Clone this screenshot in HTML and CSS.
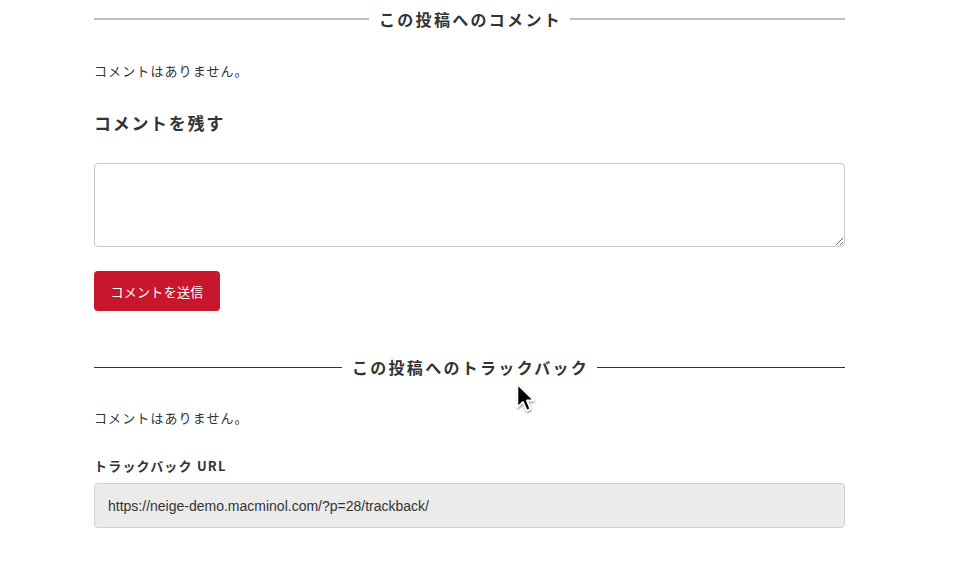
FILE: index.html
```html
<!DOCTYPE html>
<html lang="ja">
<head>
<meta charset="utf-8">
<title>コメント</title>
<link rel="stylesheet" href="styles.css">
</head>
<body>
<div class="wrap">
  <h2 class="sec-title sec-title--light"><span class="line"></span><span class="sec-text">この投稿へのコメント</span><span class="line"></span></h2>
  <p class="note note--first">コメントはありません。</p>
  <h3 class="reply-title">コメントを残す</h3>
  <textarea class="comment-box"></textarea>
  <button class="submit" type="button">コメントを送信</button>
  <h2 class="sec-title sec-title--dark"><span class="line"></span><span class="sec-text">この投稿へのトラックバック</span><span class="line"></span></h2>
  <p class="note note--second">コメントはありません。</p>
  <div class="tb-label">トラックバック URL</div>
  <div class="tb-url">https://neige-demo.macminol.com/?p=28/trackback/</div>
</div>
<svg class="cursor" width="24" height="34" viewBox="0 0 24 34">
  <defs>
    <filter id="sh" x="-50%" y="-50%" width="200%" height="200%">
      <feDropShadow dx="0.5" dy="1.5" stdDeviation="1.2" flood-color="#000" flood-opacity="0.45"/>
    </filter>
  </defs>
  <path d="M1.5 1.5 L1.5 24 L7 18.8 L10.8 27.6 L14.4 26.1 L10.7 17.4 L17.8 17.4 Z" fill="#000" stroke="#fff" stroke-width="1.6" stroke-linejoin="round" filter="url(#sh)"/>
</svg>
</body>
</html>
```
FILE: styles.css
```css
html, body {
  margin: 0;
  padding: 0;
  background: #fff;
}
body {
  font-family: "Noto Sans CJK JP", "Noto Sans", sans-serif;
  color: #333;
  position: relative;
  width: 963px;
  height: 567px;
  overflow: hidden;
}
.wrap {
  margin-left: 94px;
  width: 751px;
  display: flex;
  flex-direction: column;
}
.sec-title {
  display: flex;
  align-items: center;
  gap: 10px;
  margin: 0;
  height: 20px;
  font-size: 16px;
  line-height: 20px;
  font-weight: bold;
  letter-spacing: 2.3px;
  color: #333;
}
.sec-title--light { margin-top: 9px; }
.sec-title--dark { margin-top: 46px; }
.sec-title .line {
  flex: 1;
  height: 0;
}
.sec-title--light .line { border-top: 2px solid #bdbdbd; }
.sec-title--dark .line { border-top: 1px solid #333; }
.sec-text {
  margin-right: -2px;
  white-space: nowrap;
}
.note {
  margin: 0;
  font-size: 13px;
  line-height: 20px;
  letter-spacing: 1.1px;
  color: #333;
}
.note--first { margin-top: 32px; }
.note--second { margin-top: 31px; }
.reply-title {
  margin: 29px 0 0;
  font-size: 17px;
  line-height: 26px;
  font-weight: bold;
  letter-spacing: 1.7px;
  color: #333;
}
.comment-box {
  display: block;
  margin-top: 27px;
  width: 751px;
  height: 84px;
  box-sizing: border-box;
  border: 1px solid #c8c8c8;
  border-radius: 4px;
  background: #fff;
  resize: vertical;
}
.submit {
  margin-top: 24px;
  align-self: flex-start;
  width: 126px;
  height: 40px;
  border: none;
  border-radius: 4px;
  background: #c8162d;
  color: #fff;
  font-family: "Noto Sans CJK JP", sans-serif;
  font-size: 13px;
  letter-spacing: 0.3px;
  padding: 0;
}
.tb-label {
  margin-top: 28px;
  font-size: 13px;
  line-height: 20px;
  font-weight: bold;
  letter-spacing: 1.2px;
  color: #333;
}
.tb-url {
  margin-top: 7px;
  height: 45px;
  box-sizing: border-box;
  border: 1px solid #cfcfcf;
  border-radius: 4px;
  background: #ebebeb;
  padding: 0 13px;
  display: flex;
  align-items: center;
  font-family: "Liberation Sans", Arial, sans-serif;
  font-size: 14px;
  color: #333;
}
.cursor {
  position: absolute;
  left: 516px;
  top: 383px;
}
```
